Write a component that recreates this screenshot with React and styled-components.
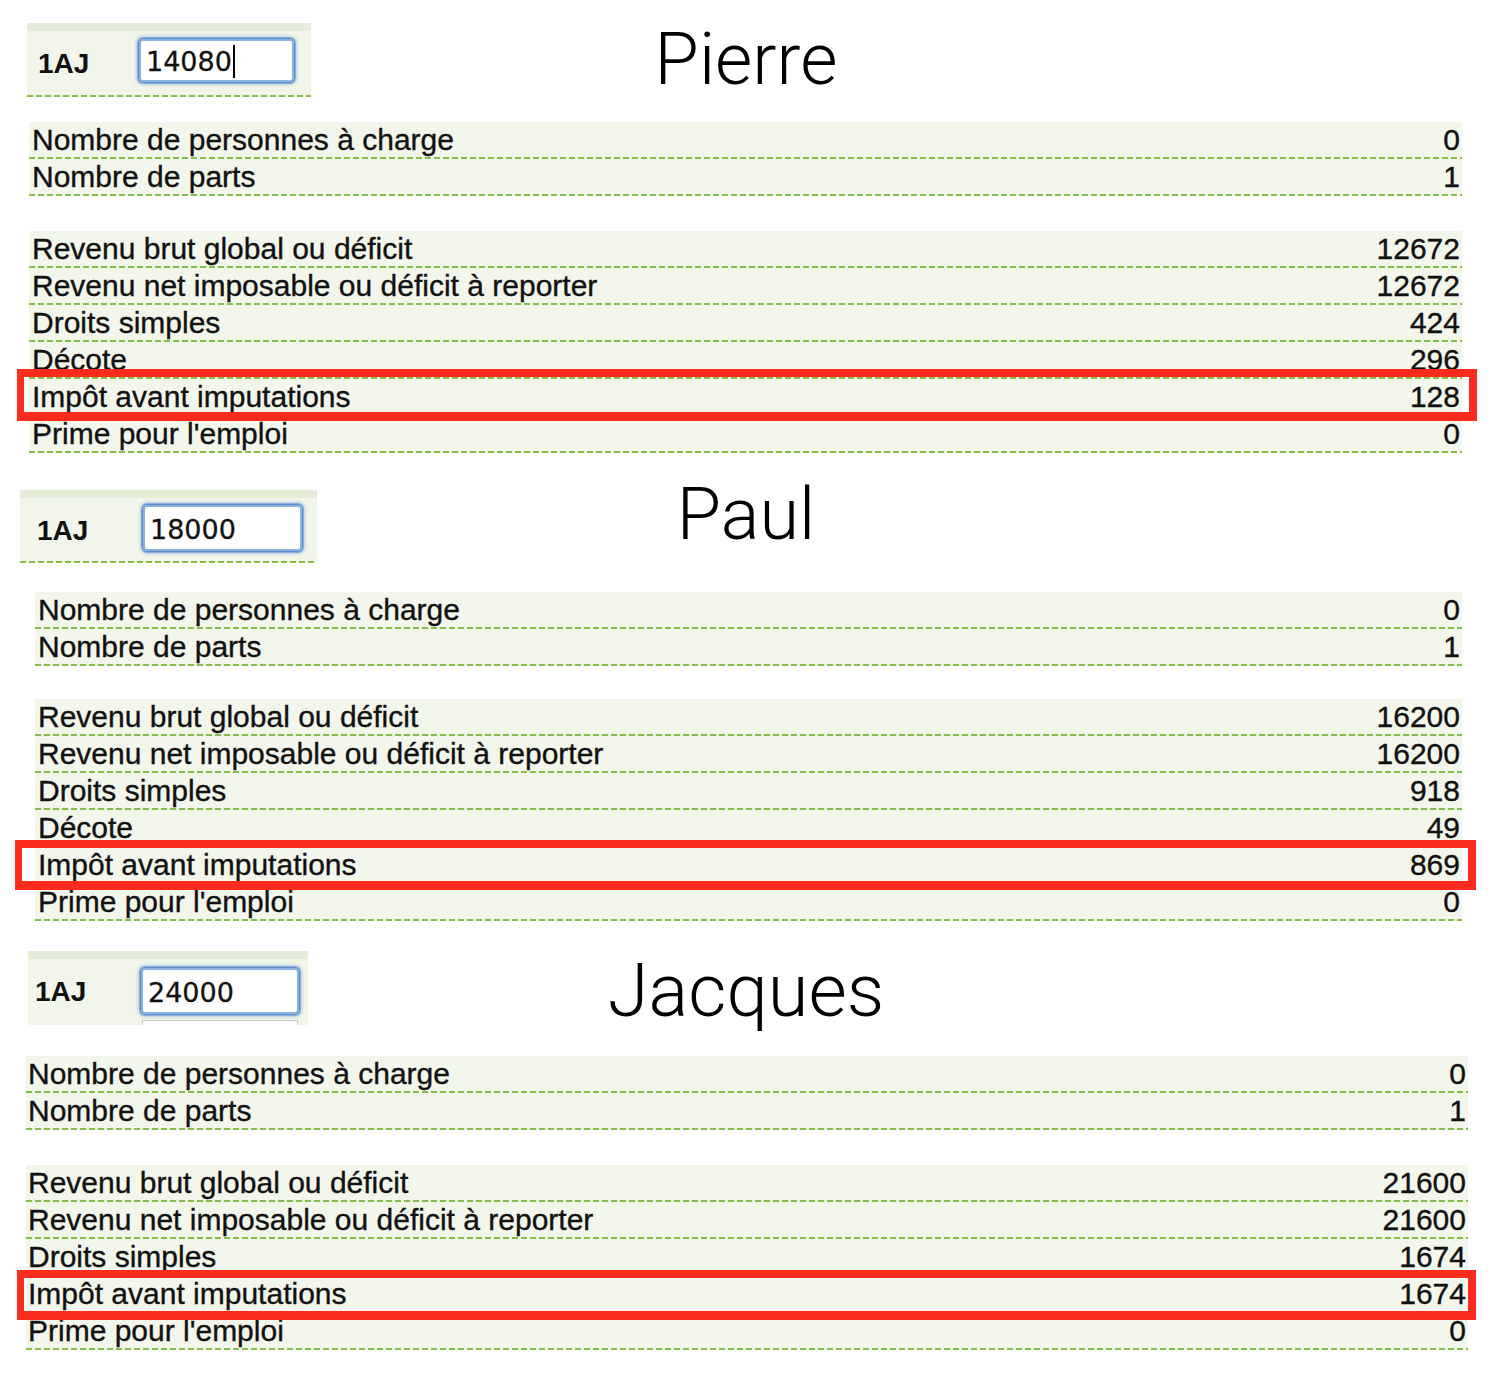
import React from 'react';
import styled, { createGlobalStyle } from 'styled-components';

const Global = createGlobalStyle`
  html, body { margin: 0; padding: 0; background: #ffffff; }
  body { width: 1504px; font-family: "Liberation Sans", Arial, sans-serif; color: #111; }
`;

const DOTS = 'repeating-linear-gradient(to right, #86be4c 0 6px, transparent 6px 9px)';

const Page = styled.div`
  display: flex;
  flex-direction: column;
  width: 1504px;
  padding-bottom: 30px;
`;

const Section = styled.section`
  display: flex;
  flex-direction: column;
  margin-top: ${p => p.$top}px;
`;

const Header = styled.div`
  display: grid;
  grid-template-columns: 1fr;
  grid-template-rows: ${p => p.$h}px;
  width: 1492px;
`;

const Panel = styled.div`
  grid-area: 1 / 1;
  justify-self: start;
  align-self: start;
  display: flex;
  align-items: flex-start;
  box-sizing: border-box;
  overflow: hidden;
  margin-left: ${p => p.$left}px;
  width: ${p => p.$w}px;
  height: ${p => p.$h}px;
  padding-left: ${p => p.$labelLeft}px;
  background: ${p => (p.$dotted ? `${DOTS} left bottom / 100% 2px no-repeat, ` : '')}
    linear-gradient(#e5ecd8 0 8px, #f2f5e9 8px);
`;

const Code = styled.div`
  flex: none;
  width: ${p => p.$w}px;
  margin-top: 25px;
  font-weight: 700;
  font-size: 28px;
  line-height: 31px;
  color: #111;
`;

const InputStack = styled.div`
  display: flex;
  flex-direction: column;
  gap: 5px;
  margin-top: ${p => p.$top}px;
`;

const Field = styled.div`
  display: flex;
  align-items: center;
  box-sizing: border-box;
  width: ${p => p.$w}px;
  height: ${p => p.$h}px;
  padding: 2px 0 0 7px;
  background: #fff;
  border: 1px solid #5f8fc8;
  border-radius: 5px;
  box-shadow: inset 0 0 0 2px rgba(128, 170, 222, 0.9), 0 0 0 1px rgba(128, 170, 222, 0.9), 0 0 3px 2px rgba(128, 170, 222, 0.5);
  font-family: "DejaVu Sans", Verdana, sans-serif;
  font-size: 27px;
  color: #111;
  -webkit-text-stroke: 0.3px #111;
`;

const Caret = styled.span`
  display: inline-block;
  width: 2px;
  height: 33px;
  margin-left: 1px;
  background: #000;
`;

const GhostField = styled.div`
  width: ${p => p.$w}px;
  height: 24px;
  box-sizing: border-box;
  background: #fff;
  border: 1px solid #c8c8c8;
  margin-left: 2px;
`;

const Name = styled.h1`
  grid-area: 1 / 1;
  justify-self: center;
  align-self: start;
  margin: ${p => p.$top}px 0 0 0;
  font-family: Roboto, "Open Sans", "Liberation Sans", sans-serif;
  font-weight: 300;
  font-size: ${p => p.$size}px;
  line-height: 82px;
  color: #000;
`;

const Group = styled.div`
  display: flex;
  flex-direction: column;
  margin-top: ${p => p.$gap}px;
  margin-left: ${p => p.$left}px;
  width: ${p => p.$w}px;
  background: #f3f6ea;
`;

const Row = styled.div`
  position: relative;
  display: flex;
  justify-content: space-between;
  box-sizing: border-box;
  height: 37px;
  padding: 0 2px 2px ${p => p.$pad}px;
  font-size: 30px;
  line-height: 35px;
  color: #111;
  -webkit-text-stroke: 0.35px #111;
  background: ${DOTS} left bottom / 100% 2px no-repeat;
`;

const Highlight = styled.div`
  position: absolute;
  z-index: 1;
  top: ${p => p.$box.top}px;
  bottom: ${p => p.$box.bottom}px;
  left: ${p => p.$box.left}px;
  right: ${p => p.$box.right}px;
  border-style: solid;
  border-color: #fb2c1e;
  border-width: 8px 8px 9px 7px;
  pointer-events: none;
`;

const sections = [
  {
    name: 'Pierre', size: 72, nameTop: -4, top: 23,
    panel: { left: 27, w: 284, h: 74, labelLeft: 11, labelW: 100, inputTop: 15, inputW: 157, inputH: 45, dotted: true },
    value: '14080', caret: true,
    table: { left: 29, w: 1433, pad: 3, gapA: 25, gapB: 35 },
    box: { top: -10, bottom: -5, left: -12, right: -15 },
    a: [['Nombre de personnes à charge', '0'], ['Nombre de parts', '1']],
    b: [
      ['Revenu brut global ou déficit', '12672'],
      ['Revenu net imposable ou déficit à reporter', '12672'],
      ['Droits simples', '424'],
      ['Décote', '296'],
      ['Impôt avant imputations', '128', true],
      ["Prime pour l'emploi", '0'],
    ],
  },
  {
    name: 'Paul', size: 72, nameTop: -16, top: 37,
    panel: { left: 20, w: 297, h: 73, labelLeft: 17, labelW: 105, inputTop: 14, inputW: 161, inputH: 48, dotted: true },
    value: '18000',
    table: { left: 35, w: 1427, pad: 3, gapA: 29, gapB: 33 },
    box: { top: -7, bottom: -6, left: -20, right: -14 },
    a: [['Nombre de personnes à charge', '0'], ['Nombre de parts', '1']],
    b: [
      ['Revenu brut global ou déficit', '16200'],
      ['Revenu net imposable ou déficit à reporter', '16200'],
      ['Droits simples', '918'],
      ['Décote', '49'],
      ['Impôt avant imputations', '869', true],
      ["Prime pour l'emploi", '0'],
    ],
  },
  {
    name: 'Jacques', size: 74, nameTop: -1, top: 30,
    panel: { left: 28, w: 280, h: 74, labelLeft: 7, labelW: 105, inputTop: 16, inputW: 160, inputH: 48, dotted: false },
    value: '24000', ghost: true,
    table: { left: 26, w: 1442, pad: 2, gapA: 31, gapB: 35 },
    box: { top: -6, bottom: -7, left: -9, right: -8 },
    a: [['Nombre de personnes à charge', '0'], ['Nombre de parts', '1']],
    b: [
      ['Revenu brut global ou déficit', '21600'],
      ['Revenu net imposable ou déficit à reporter', '21600'],
      ['Droits simples', '1674'],
      ['Impôt avant imputations', '1674', true],
      ["Prime pour l'emploi", '0'],
    ],
  },
];

function Rows({ items, table, box }) {
  return items.map(([label, val, hl]) => (
    <Row key={label} $pad={table.pad}>
      <span>{label}</span>
      <span>{val}</span>
      {hl && <Highlight $box={box} />}
    </Row>
  ));
}

export default function App() {
  return (
    <Page>
      <Global />
      {sections.map(s => (
        <Section key={s.name} $top={s.top}>
          <Header $h={s.panel.h}>
            <Panel
              $left={s.panel.left}
              $w={s.panel.w}
              $h={s.panel.h}
              $labelLeft={s.panel.labelLeft}
              $dotted={s.panel.dotted}
            >
              <Code $w={s.panel.labelW}>1AJ</Code>
              <InputStack $top={s.panel.inputTop}>
                <Field $w={s.panel.inputW} $h={s.panel.inputH}>
                  {s.value}
                  {s.caret && <Caret />}
                </Field>
                {s.ghost && <GhostField $w={s.panel.inputW - 4} />}
              </InputStack>
            </Panel>
            <Name $top={s.nameTop} $size={s.size}>{s.name}</Name>
          </Header>
          <Group $gap={s.table.gapA} $left={s.table.left} $w={s.table.w}>
            <Rows items={s.a} table={s.table} box={s.box} />
          </Group>
          <Group $gap={s.table.gapB} $left={s.table.left} $w={s.table.w}>
            <Rows items={s.b} table={s.table} box={s.box} />
          </Group>
        </Section>
      ))}
    </Page>
  );
}
